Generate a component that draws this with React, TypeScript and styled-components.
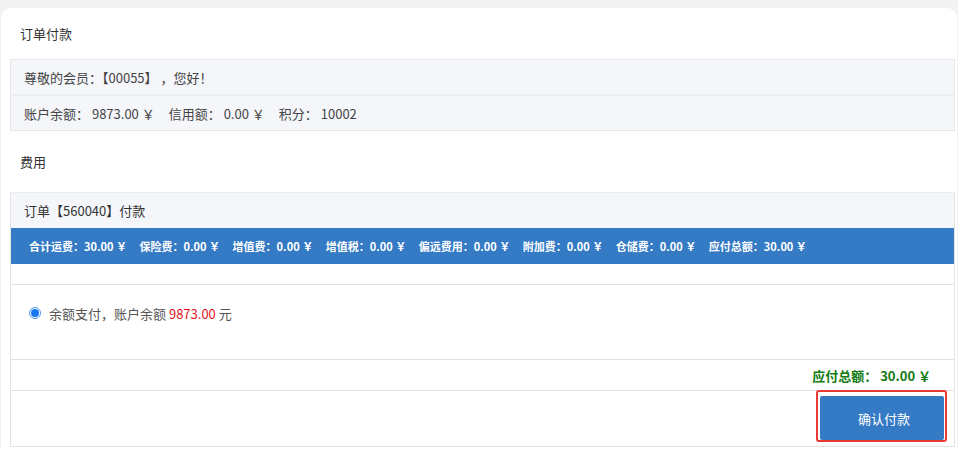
import React from "react";
import styled, { createGlobalStyle } from "styled-components";

const GlobalStyle = createGlobalStyle`
  html, body {
    margin: 0;
    padding: 0;
    background: #f2f2f2;
    font-family: "Noto Sans CJK SC", "Liberation Sans", sans-serif;
    font-size: 13px;
    color: #333;
  }
`;

const Card = styled.div`
  margin: 8px 1px 0 1px;
  background: #ffffff;
  border-radius: 10px 10px 0 0;
  padding: 0 2px 3px 9px;
  height: 441px;
  box-sizing: border-box;
`;

const SectionTitle = styled.div<{ $h: number }>`
  height: ${(p) => p.$h}px;
  display: flex;
  align-items: center;
  padding-left: 10px;
  font-size: 13px;
  color: #333;
`;

const InfoBox = styled.div`
  border: 1px solid #e6e8ec;
  background: #eceef2;
  display: flex;
  flex-direction: column;
  gap: 2px;
`;

const InfoRow = styled.div`
  height: 34px;
  background: #f5f6fa;
  display: flex;
  align-items: center;
  padding-left: 13px;
  color: #444;
  gap: 14px;
`;

const FeeBox = styled.div`
  border: 1px solid #e4e4e4;
  border-top-color: #ebedf0;
`;

const FeeHeader = styled.div`
  height: 35px;
  background: #f5f6fa;
  display: flex;
  align-items: center;
  padding-left: 13px;
  color: #333;
`;

const BlueBar = styled.div`
  height: 36px;
  background: #347ac4;
  display: flex;
  align-items: center;
  padding-left: 18px;
  gap: 12.5px;
  color: #fff;
  font-size: 11px;
  font-weight: 700;
  white-space: nowrap;
`;

const Row = styled.div<{ $h: number; $last?: boolean }>`
  height: ${(p) => p.$h}px;
  border-bottom: ${(p) => (p.$last ? "none" : "1px solid #e2e2e2")};
  display: flex;
  align-items: center;
`;

const PayRow = styled(Row)`
  padding-left: 18px;
  gap: 8px;
  color: #555;
  padding-bottom: 18px;
  box-sizing: border-box;
`;

const Radio = styled.span`
  width: 12px;
  height: 12px;
  border-radius: 50%;
  box-sizing: border-box;
  border: 1px solid #4a94f2;
  background: #fff;
  display: flex;
  align-items: center;
  justify-content: center;
  &::after {
    content: "";
    width: 8px;
    height: 8px;
    border-radius: 50%;
    background: #1677f2;
  }
`;

const Red = styled.span`
  color: #e4121b;
`;

const TotalRow = styled(Row)`
  justify-content: flex-end;
  padding-right: 23px;
  color: #137b13;
  font-weight: 700;
  gap: 3px;
`;

const ButtonRow = styled(Row)`
  justify-content: flex-end;
  padding-right: 10px;
  align-items: flex-start;
  padding-top: 5px;
  box-sizing: border-box;
`;

const ButtonWrap = styled.div`
  position: relative;
`;

const PayButton = styled.button`
  display: block;
  width: 124px;
  height: 44px;
  border: none;
  border-radius: 2px;
  background: #347ac4;
  color: #fff;
  font-family: inherit;
  font-size: 13px;
  padding-left: 10px;
  cursor: pointer;
`;

const Highlight = styled.span`
  position: absolute;
  left: -4px;
  top: -6px;
  right: -3px;
  bottom: -2px;
  border: 2px solid #e63a33;
  border-radius: 3px;
  pointer-events: none;
`;

const fees = [
  ["合计运费", "30.00"],
  ["保险费", "0.00"],
  ["增值费", "0.00"],
  ["增值税", "0.00"],
  ["偏远费用", "0.00"],
  ["附加费", "0.00"],
  ["仓储费", "0.00"],
  ["应付总额", "30.00"],
];

const App = () => {
  return (
    <>
      <GlobalStyle />
      <Card>
        <SectionTitle $h={51}>订单付款</SectionTitle>
        <InfoBox>
          <InfoRow>尊敬的会员：【00055】 ，您好！</InfoRow>
          <InfoRow>
            <span>账户余额： 9873.00 ￥</span>
            <span>信用额： 0.00 ￥</span>
            <span>积分： 10002</span>
          </InfoRow>
        </InfoBox>
        <SectionTitle $h={61}>费用</SectionTitle>
        <FeeBox>
          <FeeHeader>订单【560040】付款</FeeHeader>
          <BlueBar>
            {fees.map(([label, value]) => (
              <span key={label}>
                {label}：{value} ￥
              </span>
            ))}
          </BlueBar>
          <Row $h={20} />
          <PayRow $h={75}>
            <Radio />
            <span>
              余额支付，账户余额 <Red>9873.00</Red> 元
            </span>
          </PayRow>
          <TotalRow $h={30}>
            <span>应付总额：</span>
            <span>30.00 ￥</span>
          </TotalRow>
          <ButtonRow $h={55} $last>
            <ButtonWrap>
              <PayButton>确认付款</PayButton>
              <Highlight />
            </ButtonWrap>
          </ButtonRow>
        </FeeBox>
      </Card>
    </>
  );
};

export default App;
